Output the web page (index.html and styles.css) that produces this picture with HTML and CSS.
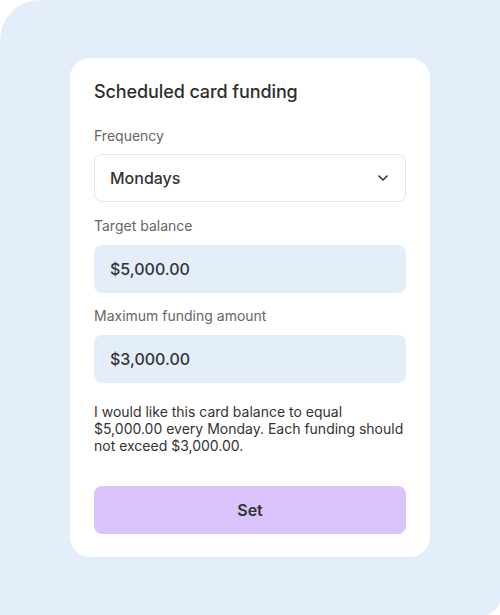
FILE: index.html
```html
<!DOCTYPE html>
<html lang="en">
<head>
    <meta charset="UTF-8">
    <title>Scheduled card funding</title>
    <link rel="stylesheet" href="styles.css">
</head>
<body>
    <div class="backdrop">
        <div class="card">
            <h2 class="card-title">Scheduled card funding</h2>

            <!-- frequency -->
            <div class="field">
                <label class="field-label">Frequency</label>
                <div class="select">
                    <span>Mondays</span>
                    <svg class="chevron" width="12" height="8" viewBox="0 0 12 8">
                        <path d="M2 2 L6 6 L10 2" fill="none" stroke="#333" stroke-width="1.6" stroke-linecap="round" stroke-linejoin="round"/>
                    </svg>
                </div>
            </div>

            <div class="field">
                <label class="field-label">Target balance</label>
                <div class="amount">$5,000.00</div>
            </div>

            <div class="field">
                <label class="field-label">Maximum funding amount</label>
                <div class="amount">$3,000.00</div>
            </div>

            <p class="summary">I would like this card balance to equal $5,000.00 every Monday. Each funding should not exceed $3,000.00.</p>

            <button class="btn-set">Set</button>
        </div>
    </div>
</body>
</html>
```

FILE: styles.css
```css
* {
    box-sizing: border-box;
    margin: 0;
    padding: 0;
}

body {
    font-family: 'Inter', 'Liberation Sans', sans-serif;
    background: #fff;
    color: #333;
}

.backdrop {
    width: 500px;
    height: 615px;
    background: #e4eefb;
    border-radius: 40px 0 16px 0;
    padding: 58px 70px;
}

.card {
    background: #fff;
    border-radius: 20px;
    padding: 23px 24px 23px;
    display: flex;
    flex-direction: column;
}

.card-title {
    font-size: 18px;
    font-weight: 500;
    line-height: 22px;
    color: #2e2e2e;
    margin-bottom: 24px;
    letter-spacing: -0.1px;
}

.field {
    display: flex;
    flex-direction: column;
    margin-bottom: 15px;
}

.field + .field {
    margin-bottom: 14px;
}

.field-label {
    font-size: 14px;
    line-height: 18px;
    color: #666;
    margin-bottom: 9px;
}

.select {
    height: 48px;
    border: 1px solid #e6e6ec;
    border-radius: 8px;
    padding: 0 16px 0 15px;
    display: flex;
    align-items: center;
    justify-content: space-between;
    font-size: 16px;
    font-weight: 500;
}

.amount {
    height: 48px;
    margin-top: 1px;
    background: #e4eefb;
    border-radius: 8px;
    padding: 0 16px;
    display: flex;
    align-items: center;
    font-size: 16px;
    font-weight: 500;
}

.summary {
    font-size: 14px;
    line-height: 17px;
    color: #333;
    margin-top: 6px;
    margin-bottom: 32px;
}

.btn-set {
    height: 48px;
    border: none;
    border-radius: 8px;
    background: #dac4fb;
    font-family: inherit;
    font-size: 16px;
    font-weight: 600;
    color: #333;
}
```
